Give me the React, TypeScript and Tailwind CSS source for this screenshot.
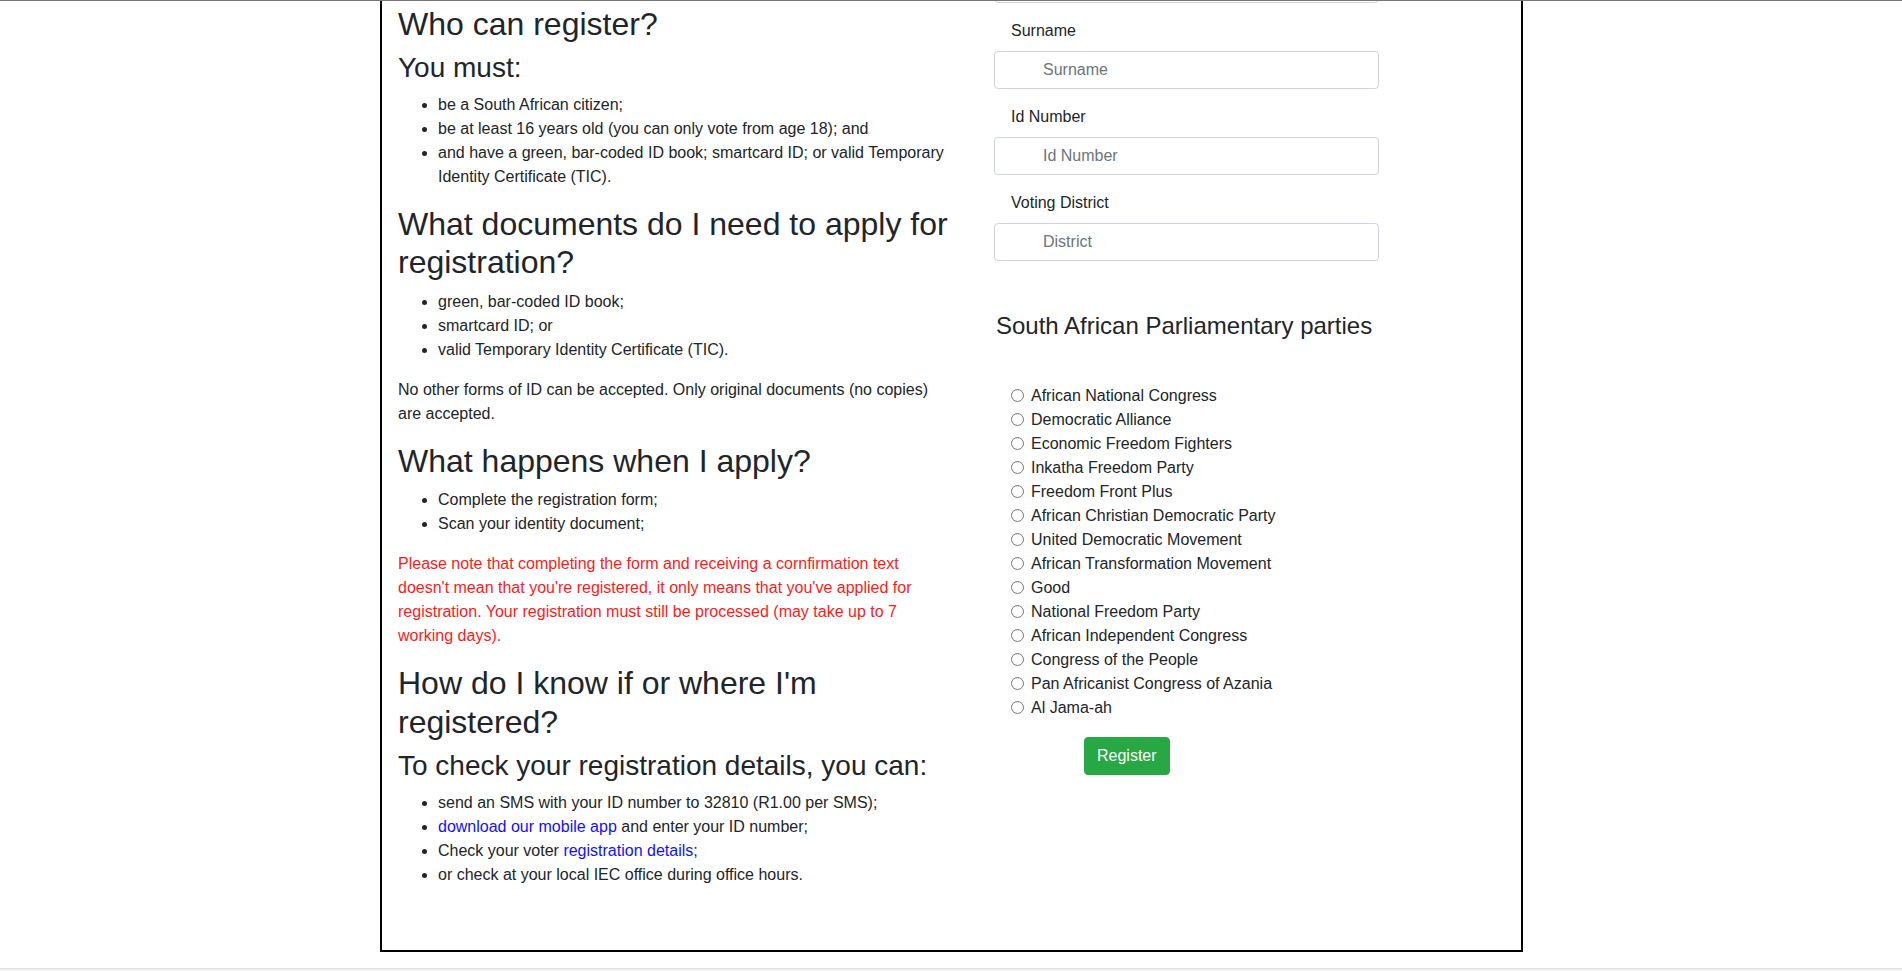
const parties = [
  'African National Congress',
  'Democratic Alliance',
  'Economic Freedom Fighters',
  'Inkatha Freedom Party',
  'Freedom Front Plus',
  'African Christian Democratic Party',
  'United Democratic Movement',
  'African Transformation Movement',
  'Good',
  'National Freedom Party',
  'African Independent Congress',
  'Congress of the People',
  'Pan Africanist Congress of Azania',
  'Al Jama-ah',
]

function Field({ label, placeholder }: { label: string; placeholder: string }) {
  return (
    <div>
      <label className="block mt-4 mb-2 pl-[17px]">{label}</label>
      <input
        type="text"
        placeholder={placeholder}
        className="block w-[385px] h-[38px] pl-[48px] pr-3 border border-[#ced4da] rounded-[4px] bg-white text-[16px] text-[#495057] placeholder:text-[#6c757d] outline-none"
      />
    </div>
  )
}

export default function App() {
  return (
    <div className="h-[971px] overflow-hidden bg-white text-[#212529] text-[16px] leading-[24px] font-['Liberation_Sans',Arial,sans-serif]">
      <div className="relative z-10 h-px bg-[#777777]" />

      <div className="ml-[380px] w-[1143px] border-x-2 border-b-2 border-black flex">
        {/* info column */}
        <div className="w-[570px] pl-[16px] pt-[4px] pb-[47px]">
          <h2 className="text-[32px] leading-[1.2] mb-2">Who can register?</h2>
          <h3 className="text-[28px] leading-[1.2] mb-2">You must:</h3>
          <ul className="list-disc pl-[40px] mb-4">
            <li>be a South African citizen;</li>
            <li>be at least 16 years old (you can only vote from age 18); and</li>
            <li>and have a green, bar-coded ID book; smartcard ID; or valid Temporary Identity Certificate (TIC).</li>
          </ul>

          <h2 className="text-[32px] leading-[1.2] mb-2">What documents do I need to apply for registration?</h2>
          <ul className="list-disc pl-[40px] mb-4">
            <li>green, bar-coded ID book;</li>
            <li>smartcard ID; or</li>
            <li>valid Temporary Identity Certificate (TIC).</li>
          </ul>
          <p className="mb-4">No other forms of ID can be accepted. Only original documents (no copies) are accepted.</p>

          <h2 className="text-[32px] leading-[1.2] mb-2">What happens when I apply?</h2>
          <ul className="list-disc pl-[40px] mb-4">
            <li>Complete the registration form;</li>
            <li>Scan your identity document;</li>
          </ul>
          <p className="mb-4 text-[#ff1a1a]">
            Please note that completing the form and receiving a cornfirmation text doesn't mean that you're
            registered, it only means that you've applied for registration. Your registration must still be
            processed (may take up to 7 working days).
          </p>

          <h2 className="text-[32px] leading-[1.2] mb-2">How do I know if or where I'm registered?</h2>
          <h3 className="text-[28px] leading-[1.2] mb-2">To check your registration details, you can:</h3>
          <ul className="list-disc pl-[40px] mb-4">
            <li>send an SMS with your ID number to 32810 (R1.00 per SMS);</li>
            <li>
              <a href="#" className="text-[#1010ff]">download our mobile app</a> and enter your ID number;
            </li>
            <li>
              Check your voter <a href="#" className="text-[#1010ff]">registration details;</a>
            </li>
            <li>or check at your local IEC office during office hours.</li>
          </ul>
        </div>

        {/* form column */}
        <div className="pl-[42px]">
          <div className="h-[2px] overflow-hidden flex flex-col justify-end">
            <input
              type="text"
              placeholder="Name"
              className="block shrink-0 w-[385px] h-[38px] border border-[#ced4da] rounded-[4px] bg-white"
            />
          </div>
          <Field label="Surname" placeholder="Surname" />
          <Field label="Id Number" placeholder="Id Number" />
          <Field label="Voting District" placeholder="District" />

          <h4 className="mt-[51px] pl-[2px] text-[24px] leading-[1.2]">South African Parliamentary parties</h4>

          <div className="mt-[43px] pl-[12px]">
            {parties.map((party) => (
              <label key={party} className="flex items-center h-[24px]">
                <input type="radio" name="party" className="m-0 ml-[5px] mr-[7px] w-[13px] h-[13px] shrink-0" />
                <span>{party}</span>
              </label>
            ))}
          </div>

          <button
            type="button"
            className="mt-[17px] ml-[90px] h-[38px] px-3 rounded-[4px] border border-[#28a745] bg-[#28a745] text-white text-[16px]"
          >
            Register
          </button>
        </div>
      </div>

      <div className="mt-[16px] h-[40px] bg-[#efefef] border-t border-[#e2e2e2]" />
    </div>
  )
}
